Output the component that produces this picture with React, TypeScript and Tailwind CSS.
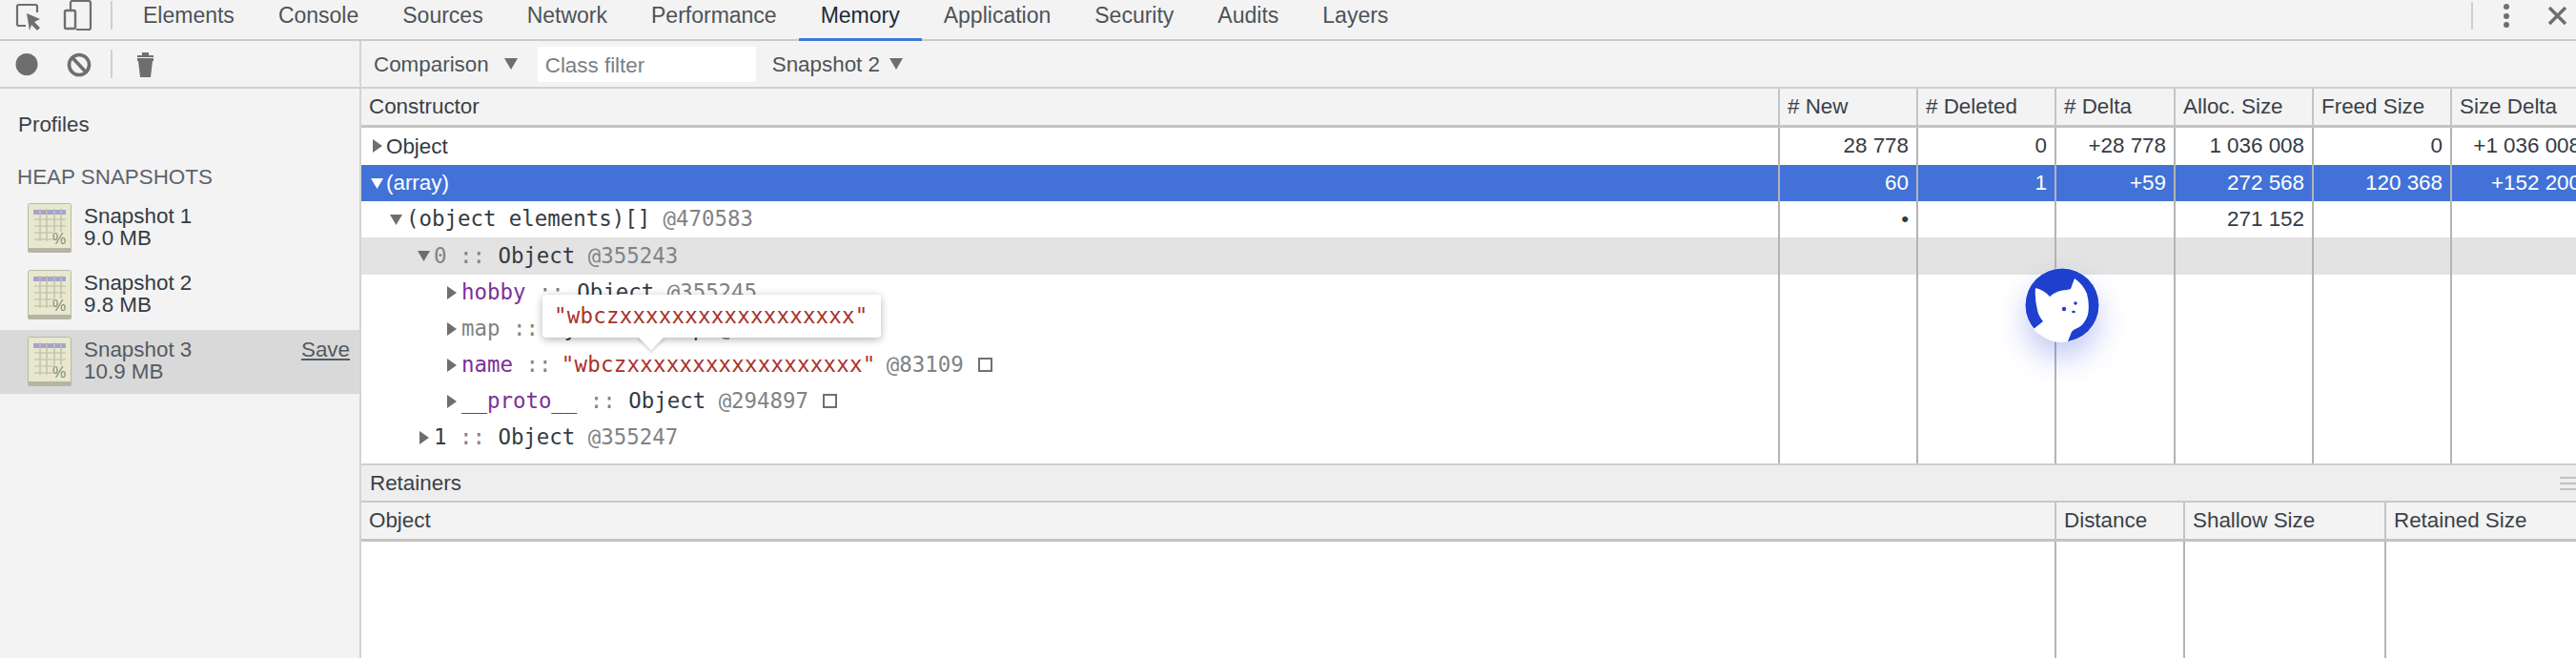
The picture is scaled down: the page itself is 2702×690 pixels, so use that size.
import React from "react";

const gridCols = "grid grid-cols-[1486px_145px_145px_125px_145px_145px_145px] w-[2336px]";

function Tri({ down, color = "#6e6e6e" }: { down?: boolean; color?: string }) {
  return (
    <svg width="13" height="16" viewBox="0 0 13 16" className="shrink-0">
      {down ? <path d="M0 3h13L6.5 14z" fill={color} /> : <path d="M2 1l10 7-10 7z" fill={color} />}
    </svg>
  );
}

function Num({ v }: { v?: string }) {
  return (
    <div className="border-l-2 border-[#b4b4b4] pr-[8px] text-right leading-[38px] whitespace-nowrap overflow-hidden">{v ?? ""}</div>
  );
}

function Row({
  label,
  vals,
  sel,
  gray,
  h = "h-[38px]",
}: {
  label: React.ReactNode;
  vals: (string | undefined)[];
  sel?: boolean;
  gray?: boolean;
  h?: string;
}) {
  return (
    <div className={`${gridCols} ${h} shrink-0 ${sel ? "bg-[#4272d7] text-white" : gray ? "bg-[#e3e3e3] text-[#333b44]" : "bg-white text-[#333b44]"}`}>
      <div className="flex items-center whitespace-nowrap overflow-hidden">{label}</div>
      {vals.map((v, i) => (
        <Num key={i} v={v} />
      ))}
    </div>
  );
}

const Mono = ({ children }: { children: React.ReactNode }) => (
  <span className="font-['DejaVu_Sans_Mono','Liberation_Mono',monospace] text-[22.4px] whitespace-pre">{children}</span>
);
const G = ({ children }: { children: React.ReactNode }) => <span className="text-[#7f8386]">{children}</span>;
const P = ({ children }: { children: React.ReactNode }) => <span className="text-[#7b2f98]">{children}</span>;
const R = ({ children }: { children: React.ReactNode }) => <span className="text-[#a9312a] tracking-[0.25px]">{children}</span>;
const Box = () => <span className="inline-block w-[15px] h-[15px] border-2 border-[#707070] ml-[15px]" />;

const empty = [undefined, undefined, undefined, undefined, undefined, undefined];

function Tree({ level, down, children }: { level: number; down?: boolean; children: React.ReactNode }) {
  const pad = level === 1 ? "pl-[30px]" : level === 2 ? "pl-[59px]" : "pl-[88px]";
  return (
    <div className={`flex items-center gap-[4px] ${pad}`}>
      <Tri down={down} />
      <Mono>{children}</Mono>
    </div>
  );
}

function SnapIcon() {
  return (
    <svg width="46" height="52" viewBox="0 0 46 52" className="shrink-0">
      <rect x="0.5" y="0.5" width="45" height="50" rx="2" fill="#e8e8cf" stroke="#b9b9a8" />
      <rect x="0" y="47" width="46" height="5" rx="2" fill="#b5b5a5" />
      <rect x="6" y="7" width="34" height="5" fill="#a5a3d0" />
      <path d="M7 17h33M7 24h33M7 31h20M7 38h20" stroke="#c9c9b4" strokeWidth="1.5" />
      <path d="M13 6v34M20 6v34M28 6v24M35 6v24" stroke="#c2c2ae" strokeWidth="1.5" />
      <text x="26" y="43" fontSize="16" fill="#7d8a7a" fontFamily="Liberation Sans">%</text>
    </svg>
  );
}

function Snap({ name, size, sel }: { name: string; size: string; sel?: boolean }) {
  return (
    <div className={`flex items-start pl-[29px] pt-[7px] ${sel ? "h-[67px] bg-[#d9d9d9] text-[#555b62]" : "h-[70px] text-[#333b44]"}`}>
      <SnapIcon />
      <div className="ml-[13px] leading-[23px] pt-[2px] flex-1">
        <div>{name}</div>
        <div>{size}</div>
      </div>
      {sel && <span className="mr-[10px] mt-[2px] leading-[23px] underline text-[#555b62]">Save</span>}
    </div>
  );
}

const tabs = ["Elements", "Console", "Sources", "Network", "Performance", "Memory", "Application", "Security", "Audits", "Layers"];

function Cat() {
  return (
    <div className="absolute left-[2124px] top-[281px] w-[78px] h-[78px] rounded-full shadow-[0_16px_30px_rgba(40,70,220,0.28)]">
      <svg width="78" height="78" viewBox="0 0 78 78">
        <circle cx="39" cy="39" r="39" fill="#ffffff" />
        <circle cx="39" cy="39" r="38.5" fill="#1f40cf" />
        <path
          d="M11 21 Q20 23 26 30 Q34 23 44 23 L48 22 Q50 16 52 11 Q61 17 65 27 Q68 38 66 49 Q63 58 57 62 Q50 65 49 67 L45 77 Q38 79 30 77 Q17 73 9 64 L19 56 Q14 50 13 44 Q10 32 11 21 Z"
          fill="#ffffff"
        />
        <circle cx="41" cy="43" r="2.2" fill="#1f40cf" />
        <circle cx="53" cy="37" r="1.8" fill="#1f40cf" />
        <ellipse cx="51" cy="46" rx="1.9" ry="1.2" fill="#1f40cf" />
      </svg>
    </div>
  );
}

export default function App() {
  return (
    <div className="relative w-[2702px] h-[690px] overflow-hidden bg-[#f3f3f3] font-['Liberation_Sans',Arial,sans-serif] text-[22.4px] text-[#333b44] flex flex-col">
      {/* Top tab bar */}
      <div className="h-[43px] shrink-0 flex items-stretch border-b-[2px] border-[#cbcbcb]">
        <div className="w-[127px] shrink-0 flex items-start relative">
          <svg width="127" height="41" viewBox="0 0 127 41" fill="none">
            <path d="M27 27h-7a2 2 0 0 1-2-2V7a2 2 0 0 1 2-2h17a2 2 0 0 1 2 2v6" stroke="#6e6e6e" strokeWidth="2.2" />
            <path d="M28 14l14 6-6 3 6 6-3 3-6-6-2 6z" fill="#6e6e6e" />
            <path d="M74 10V3a2 2 0 0 1 2-2h17a2 2 0 0 1 2 2v26a2 2 0 0 1-2 2H80" stroke="#6e6e6e" strokeWidth="2.2" />
            <rect x="68" y="11" width="11" height="19" rx="1.5" stroke="#6e6e6e" strokeWidth="2.4" />
            <path d="M117 1v30" stroke="#cfcfcf" strokeWidth="2" />
          </svg>
        </div>
        {tabs.map((t) => (
          <div
            key={t}
            className={`px-[23px] pt-[2px] text-[23px] leading-[28px] whitespace-nowrap -mb-[2px] ${t === "Memory" ? "text-[#222a33] border-b-[3px] border-[#3d78d8]" : "text-[#4d5359]"}`}
          >
            {t}
          </div>
        ))}
        <div className="flex-1" />
        <div className="w-[110px] shrink-0 flex justify-end">
          <svg width="110" height="41" viewBox="2592 0 110 41" fill="none">
            <path d="M2593 2v29" stroke="#cfcfcf" strokeWidth="2" />
            <circle cx="2629" cy="7" r="3" fill="#6e6e6e" />
            <circle cx="2629" cy="17" r="3" fill="#6e6e6e" />
            <circle cx="2629" cy="26" r="3" fill="#6e6e6e" />
            <path d="M2674 8l17 17M2691 8l-17 17" stroke="#6e6e6e" strokeWidth="3.4" />
          </svg>
        </div>
      </div>

      <div className="flex-1 flex min-h-0">
        {/* Sidebar */}
        <div className="w-[379px] shrink-0 border-r-2 border-[#d4d4d4] flex flex-col">
          <div className="h-[50px] shrink-0 border-b-[2px] border-[#d0d0d0]">
            <svg width="170" height="48" viewBox="0 43 170 48" fill="none">
              <circle cx="28" cy="67.5" r="11.5" fill="#6e6e6e" />
              <circle cx="83" cy="68" r="10.5" stroke="#6e6e6e" strokeWidth="3.6" />
              <path d="M76 60.5l14 15" stroke="#6e6e6e" strokeWidth="3.6" />
              <path d="M117 52v30" stroke="#cfcfcf" strokeWidth="2" />
              <path d="M144 61h17v3h-1l-2 17h-11l-2-17h-1z" fill="#6e6e6e" />
              <path d="M149 55h7v3h5v2h-17v-2h5z" fill="#6e6e6e" />
            </svg>
          </div>
          <div className="pl-[19px] pt-[25px] leading-[26px] text-[#3a4148]">Profiles</div>
          <div className="pl-[18px] pt-[29px] leading-[26px] text-[#5d646b] whitespace-nowrap">HEAP SNAPSHOTS</div>
          <div className="pt-[7px]">
            <Snap name="Snapshot 1" size="9.0 MB" />
            <Snap name="Snapshot 2" size="9.8 MB" />
            <Snap name="Snapshot 3" size="10.9 MB" sel />
          </div>
        </div>

        {/* Main */}
        <div className="flex-1 min-w-0 flex flex-col">
          <div className="h-[50px] shrink-0 border-b-[2px] border-[#d0d0d0] flex items-center pl-[13px] text-[#4d5359]">
            <span className="pt-[2px]">Comparison</span>
            <svg width="14" height="12" viewBox="0 0 14 12" className="ml-[16px]"><path d="M0 0h14L7 12z" fill="#6e6e6e" /></svg>
            <div className="ml-[21px] w-[229px] h-[37px] bg-white pl-[8px] leading-[39px] text-[#7a7f84]">Class filter</div>
            <span className="ml-[17px] pt-[2px]">Snapshot 2</span>
            <svg width="14" height="12" viewBox="0 0 14 12" className="ml-[10px]"><path d="M0 0h14L7 12z" fill="#6e6e6e" /></svg>
          </div>

          {/* Top data grid */}
          <div className="h-[395px] shrink-0 overflow-hidden flex flex-col border-b-[2px] border-[#d0d0d0]">
            <div className={`${gridCols} h-[41px] shrink-0 border-b-[3px] border-[#c4c4c4] text-[#3a4148]`}>
              <div className="pl-[8px] leading-[38px]">Constructor</div>
              {["# New", "# Deleted", "# Delta", "Alloc. Size", "Freed Size", "Size Delta"].map((h) => (
                <div key={h} className="border-l-2 border-[#c4c4c4] pl-[8px] leading-[38px] whitespace-nowrap">{h}</div>
              ))}
            </div>
            <Row
              h="h-[39px]"
              label={
                <div className="flex items-center gap-[3px] pl-[10px]">
                  <Tri /> <span>Object</span>
                </div>
              }
              vals={["28 778", "0", "+28 778", "1 036 008", "0", "+1 036 008"]}
            />
            <Row
              sel
              label={
                <div className="flex items-center gap-[3px] pl-[10px]">
                  <Tri down color="#ffffff" /> <span>(array)</span>
                </div>
              }
              vals={["60", "1", "+59", "272 568", "120 368", "+152 200"]}
            />
            <Row
              label={<Tree level={1} down>(object elements)[] <G>@470583</G></Tree>}
              vals={["•", undefined, undefined, "271 152", undefined, undefined]}
            />
            <Row gray h="h-[39px]" label={<Tree level={2} down><G>0 :: </G>Object <G>@355243</G></Tree>} vals={empty} />
            <Row label={<Tree level={3}><P>hobby</P><G> :: </G>Object <G>@355245</G></Tree>} vals={empty} />
            <Row label={<Tree level={3}><G>map :: </G>system / Map <G>@355253</G></Tree>} vals={empty} />
            <Row
              label={
                <Tree level={3}>
                  <P>name</P><G> :: </G><span className="-ml-[3px]"><R>"wbczxxxxxxxxxxxxxxxxxx"</R></span><span className="-ml-[2px]"><G> @83109</G></span><Box />
                </Tree>
              }
              vals={empty}
            />
            <Row label={<Tree level={3}><P>__proto__</P><G> :: </G>Object <G>@294897</G><Box /></Tree>} vals={empty} />
            <Row label={<Tree level={2}>1<G> :: </G>Object <G>@355247</G></Tree>} vals={empty} />
            <Row label={<Tree level={2}>2<G> :: </G>Object <G>@355249</G></Tree>} vals={empty} />
          </div>

          {/* Retainers */}
          <div className="h-[39px] shrink-0 bg-[#eeeeee] flex items-center justify-between pl-[9px] border-b-[2px] border-[#c8c8c8] text-[#3a4148]">
            <span>Retainers</span>
            <svg width="17" height="16" viewBox="0 0 17 16" className="shrink-0"><path d="M0 2h17M0 8h17M0 14h17" stroke="#c2c2c2" strokeWidth="2" /></svg>
          </div>
          <div className="grid grid-cols-[1776px_135px_211px_1fr] h-[41px] shrink-0 border-b-[3px] border-[#c4c4c4] text-[#3a4148]">
            <div className="pl-[8px] leading-[38px]">Object</div>
            {["Distance", "Shallow Size", "Retained Size"].map((h) => (
              <div key={h} className="border-l-2 border-[#c4c4c4] pl-[8px] leading-[38px] whitespace-nowrap">{h}</div>
            ))}
          </div>
          <div className="grid grid-cols-[1776px_135px_211px_1fr] flex-1 bg-white">
            <div />
            <div className="border-l-2 border-[#b4b4b4]" />
            <div className="border-l-2 border-[#b4b4b4]" />
            <div className="border-l-2 border-[#b4b4b4]" />
          </div>
        </div>
      </div>

      {/* Tooltip */}
      <div className="absolute left-[569px] top-[309px] w-[355px] h-[45px] bg-white rounded-[4px] shadow-[0_2px_8px_rgba(0,0,0,0.3)] pl-[12px] leading-[44px]">
        <Mono><R>"wbczxxxxxxxxxxxxxxxxxx"</R></Mono>
        <div className="absolute left-[104px] top-[34px] w-[20px] h-[20px] rotate-45 bg-white shadow-[2px_2px_3px_rgba(0,0,0,0.15)]" />
      </div>

      <Cat />
    </div>
  );
}
